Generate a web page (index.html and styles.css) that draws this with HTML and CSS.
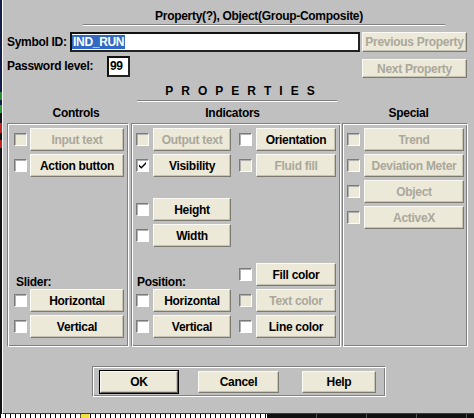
FILE: index.html
```html
<!DOCTYPE html>
<html>
<head>
<meta charset="utf-8">
<link rel="stylesheet" href="styles.css">
</head>
<body>
<div class="screen">
  <div class="edge"></div>
  <div class="dialog">
    <div class="title">Property(?), Object(Group-Composite)</div>

    <div class="row row1">
      <span class="lbl">Symbol ID:</span>
      <div class="field idfield"><span class="sel">IND_RUN</span></div>
      <button class="btn dis nav">Previous Property</button>
    </div>
    <div class="row row2">
      <span class="lbl">Password level:</span>
      <div class="field pwfield">99</div>
      <button class="btn dis nav next">Next Property</button>
    </div>

    <div class="props">PROPERTIES</div>

    <div class="heads">
      <div class="h h1">Controls</div>
      <div class="h h2">Indicators</div>
      <div class="h h3">Special</div>
    </div>

    <div class="panels">
      <div class="panel controls">
        <div class="item"><span class="cb dis"></span><button class="btn dis">Input text</button></div>
        <div class="item"><span class="cb"></span><button class="btn">Action button</button></div>
        <div class="sub">Slider:</div>
        <div class="item"><span class="cb"></span><button class="btn">Horizontal</button></div>
        <div class="item"><span class="cb"></span><button class="btn">Vertical</button></div>
      </div>

      <div class="panel indicators">
        <div class="col col1">
          <div class="item"><span class="cb dis"></span><button class="btn dis">Output text</button></div>
          <div class="item"><span class="cb"><svg width="11" height="11" viewBox="0 0 11 11"><path d="M2 4.5 L4.3 6.8 L9 2 L9 4 L4.3 8.8 L2 6.5 Z" fill="#000"/></svg></span><button class="btn">Visibility</button></div>
          <div class="item gapped"><span class="cb"></span><button class="btn">Height</button></div>
          <div class="item"><span class="cb"></span><button class="btn">Width</button></div>
          <div class="sub">Position:</div>
          <div class="item"><span class="cb"></span><button class="btn">Horizontal</button></div>
          <div class="item"><span class="cb"></span><button class="btn">Vertical</button></div>
        </div>
        <div class="col col2">
          <div class="item"><span class="cb"></span><button class="btn">Orientation</button></div>
          <div class="item"><span class="cb dis"></span><button class="btn dis">Fluid fill</button></div>
          <div class="item push"><span class="cb"></span><button class="btn">Fill color</button></div>
          <div class="item"><span class="cb dis"></span><button class="btn dis">Text color</button></div>
          <div class="item"><span class="cb"></span><button class="btn">Line color</button></div>
        </div>
      </div>

      <div class="panel special">
        <div class="item"><span class="cb dis"></span><button class="btn dis">Trend</button></div>
        <div class="item"><span class="cb dis"></span><button class="btn dis">Deviation Meter</button></div>
        <div class="item"><span class="cb dis"></span><button class="btn dis">Object</button></div>
        <div class="item"><span class="cb dis"></span><button class="btn dis">ActiveX</button></div>
      </div>
    </div>

    <div class="footer">
      <button class="btn ok">OK</button>
      <button class="btn cancel">Cancel</button>
      <button class="btn help">Help</button>
    </div>
  </div>
</div>
<div class="strip">
  <div class="strip-left"></div>
  <div class="strip-right"></div>
</div>
</body>
</html>
```

FILE: styles.css
```css
* { box-sizing: border-box; margin: 0; padding: 0; }

html, body {
  width: 474px;
  height: 418px;
  overflow: hidden;
}

body {
  background: #1a1a1a;
  font-family: "Liberation Sans", Arial, sans-serif;
  font-weight: bold;
  font-size: 12px;
  letter-spacing: -0.3px;
  color: #000;
}

.screen {
  display: flex;
  height: 414px;
}

.edge {
  width: 2px;
  background: linear-gradient(to bottom,
    #14204a 0, #14204a 92px,
    #2a8a3a 92px, #2a8a3a 100px,
    #14204a 100px, #14204a 105px,
    #2a9a3a 105px, #2a9a3a 113px,
    #141414 113px, #141414 123px,
    #c02020 123px, #c02020 133px,
    #141414 133px, #141414 140px,
    #c02020 140px, #c02020 148px,
    #141414 148px);
}

.dialog {
  flex: 1;
  background: #c0c0c0;
  border-left: 1px solid #fff;
  border-bottom: 1px solid #3a3a3a;
  display: flex;
  flex-direction: column;
}

/* title */
.title {
  margin-left: 80px;
  width: 362px;
  padding-top: 9px;
  padding-bottom: 1px;
  padding-right: 10px;
  line-height: 14px;
  text-align: center;
  border-bottom: 1px solid #808080;
  box-shadow: 0 1px 0 #fff;
}

/* rows */
.row {
  display: flex;
  margin-left: 4px;
}
.lbl { line-height: 14px; white-space: nowrap; }

.row1 {
  margin-top: 7px;
  height: 20px;
  align-items: center;
}
.row1 .lbl { width: 63px; }

.row2 {
  margin-top: 4px;
  height: 22px;
  align-items: flex-start;
}
.row2 .lbl { width: 100px; line-height: 21px; }

.field {
  background: #fff;
  border: 2px solid #111;
  border-right-color: #222;
  border-bottom-color: #222;
}
.idfield {
  width: 290px;
  height: 20px;
  display: flex;
  align-items: center;
}
.sel {
  background: #316ac5;
  color: #fff;
  line-height: 14px;
  padding: 0 1px;
}
.pwfield {
  width: 23px;
  height: 21px;
  line-height: 17px;
  padding-left: 1px;
}

/* buttons */
.btn {
  font: inherit;
  letter-spacing: inherit;
  color: #000;
  background: #ece9d8;
  border: 1px solid;
  border-color: #fbfaf4 #7c7a70 #7c7a70 #fbfaf4;
  box-shadow: inset -1px -1px 0 #c8c4b4;
  height: 23px;
  display: flex;
  align-items: center;
  justify-content: center;
  white-space: nowrap;
  cursor: default;
}
.btn.dis { color: #aaa79b; }

.nav { margin-left: 2px; width: 105px; height: 20px; }
.row2 .nav { margin-left: 232px; margin-top: 3px; height: 19px; }

/* properties heading */
.props {
  margin-left: 134px;
  margin-top: 6px;
  width: 200px;
  padding-left: 14px;
  padding-bottom: 2px;
  line-height: 14px;
  text-align: center;
  letter-spacing: 8px;
  border-bottom: 1px solid #808080;
  box-shadow: 0 1px 0 #fff;
}

.heads {
  display: flex;
  margin-left: 4px;
  margin-top: 5px;
  line-height: 14px;
}
.h { text-align: center; }
.h1 { width: 122px; padding-left: 16px; }
.h2 { width: 210px; margin-left: 2px; padding-right: 7px; }
.h3 { width: 126px; margin-left: 1px; padding-left: 7px; }

/* panels */
.panels {
  display: flex;
  margin-left: 4px;
  margin-top: 3px;
  height: 224px;
}
.panel {
  border: 1px solid;
  border-color: #808080 #fff #fff #808080;
  box-shadow: inset 1px 1px 0 #fff, inset -1px -1px 0 #808080;
  display: flex;
  flex-direction: column;
}

.item {
  display: flex;
  align-items: center;
  height: 23px;
}
.item + .item { margin-top: 3px; }

.cb {
  width: 13px;
  height: 13px;
  flex: none;
  background: #fff;
  border: 1px solid;
  border-color: #7a7a7a #fff #fff #7a7a7a;
  box-shadow: inset 1px 1px 0 #b0b0b0;
  display: flex;
  align-items: center;
  justify-content: center;
}
.cb.dis { background: #ece9d8; }
.cb svg { display: block; }

.sub {
  margin-top: auto;
  line-height: 14px;
}

.controls {
  width: 122px;
  padding: 4px 0 8px 6px;
}
.controls .cb { margin-right: 3px; }
.controls .btn { width: 94px; }
.controls .sub { padding-left: 2px; }

.indicators {
  width: 210px;
  margin-left: 2px;
  flex-direction: row;
  padding: 4px 0 8px 0;
}
.col {
  display: flex;
  flex-direction: column;
}
.col1 { width: 103px; padding-left: 4px; }
.col1 .btn { width: 78px; }
.col1 .sub { padding-left: 1px; }
.col2 { padding-left: 4px; }
.col2 .btn { width: 80px; }
.indicators .cb { margin-right: 4px; }
.item.gapped { margin-top: 21px; }
.item.push { margin-top: auto; }

.special {
  width: 126px;
  margin-left: 1px;
  padding: 4px 0 0 4px;
}
.special .cb { margin-right: 4px; }
.special .btn { width: 100px; }

/* footer */
.footer {
  margin-top: 19px;
  margin-left: 89px;
  width: 294px;
  height: 31px;
  border: 1px solid;
  border-color: #808080 #fff #fff #808080;
  box-shadow: inset 1px 1px 0 #fff, inset -1px -1px 0 #808080;
  display: flex;
  align-items: flex-start;
  padding: 4px 0 0 7px;
}
.footer .btn { height: 22px; }
.ok {
  width: 78px;
  outline: 1px solid #000;
  outline-offset: 0;
  border-color: #fbfaf4 #5a5850 #5a5850 #fbfaf4;
}
.cancel { width: 81px; margin-left: 20px; }
.help { width: 74px; margin-left: 23px; }

/* bottom strip */
.strip {
  display: flex;
  height: 4px;
}
.strip-left {
  width: 267px;
  background:
    radial-gradient(circle at 85px 2px, #f0e040 0, #f0e040 4px, transparent 5px),
    repeating-linear-gradient(to right, #000 0, #000 1px, #fff 1px, #fff 5px);
}
.strip-right {
  flex: 1;
  background:
    repeating-linear-gradient(to right, #111 0, #111 49px, #555 49px, #555 50px);
}
```
